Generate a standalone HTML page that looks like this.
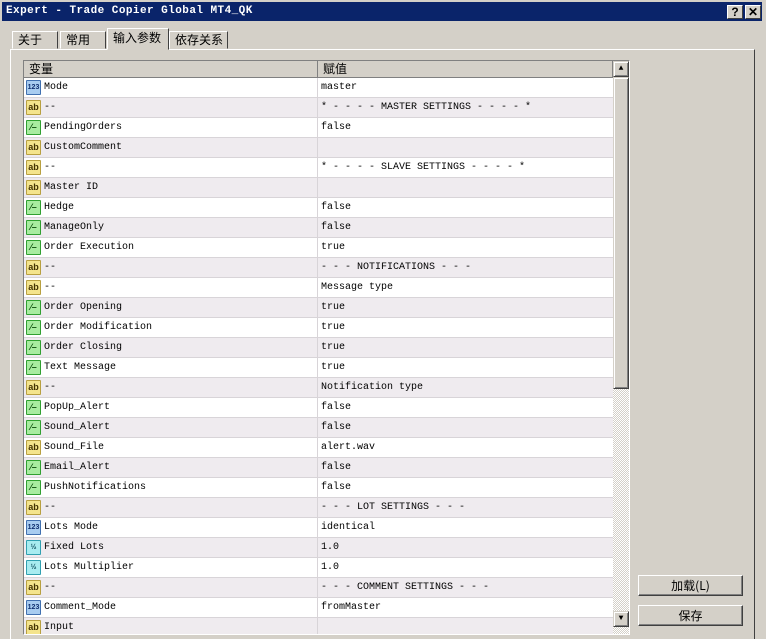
<!DOCTYPE html>
<html><head><meta charset="utf-8"><style>
*{margin:0;padding:0;box-sizing:border-box}
body{width:766px;height:630px;background:#d4d0c8;position:relative;overflow:hidden;font-family:"Liberation Mono","Noto Sans CJK SC",monospace;font-size:10px;color:#000}
.title{position:absolute;left:0;top:0;width:766px;height:22px;background:#d4d0c8;border-bottom:1px solid #d4d0c8}
.tb{position:absolute;left:2px;top:2px;width:760px;height:19px;background:#0a246a;color:#fff;font-weight:bold;font-size:11px;line-height:19px;padding-left:4px;letter-spacing:0.45px;font-family:"Liberation Mono",monospace}
.tbtn{position:absolute;top:5px;width:16px;height:14px;background:#d4d0c8;border:1px solid;border-color:#fff #404040 #404040 #fff;color:#000;font:bold 12px/12px "Liberation Sans",sans-serif;text-align:center}
.tab{position:absolute;height:18px;border:1px solid;border-color:#fff #404040 transparent #fff;font:12px/16px "Noto Sans CJK SC",sans-serif;padding-left:5px;background:#d4d0c8}
.panel{position:absolute;left:10px;top:49px;width:745px;height:590px;border-left:1px solid #fff;border-top:1px solid #fff;border-right:1px solid #404040}
.grid{position:absolute;left:23px;top:60px;width:607px;height:575px;border:1px solid;border-color:#808080 #fff #fff #808080;background:#fff;overflow:hidden}
.hdr{position:absolute;left:0;top:0;width:589px;height:17px;background:#d4d0c8;border-bottom:1px solid #808080;font:12px/16px "Noto Sans CJK SC",sans-serif}
.hdr span{position:absolute;top:0;height:16px;border-right:1px solid #808080;padding-left:5px}
.rows{position:absolute;left:0;top:17px;width:589px}
.r{height:20px;border-bottom:1px solid #d8d4d8;position:relative;line-height:20px;white-space:pre}
.r:nth-child(even){background:#efebef}
.r .n{position:absolute;left:20px;top:0}
.r .v{position:absolute;left:293px;top:0;border-left:1px solid #d8d4d8;height:19px;padding-left:3px}
.i{position:absolute;left:2px;top:2px;width:15px;height:15px;border:1px solid;font:bold 7px/13px "Liberation Sans",sans-serif;text-align:center;border-radius:1px}
.ab{background:#f4e48c;border-color:#b8a040;color:#403000;font-size:9px}
.nm{background:#a8ccf0;border-color:#4070b0;color:#103070}
.bo{background:#a8eca0;border-color:#30a030;color:#105010;font-size:9px}
.fr{background:#a8ecf0;border-color:#30a0b0;color:#105060}
.sb{position:absolute;left:589px;top:0;width:16px;height:573px;background:repeating-conic-gradient(#d4d0c8 0 25%,#fff 0 50%) 0 0/2px 2px}
.sbb{position:absolute;left:0;width:16px;height:16px;background:#d4d0c8;border:1px solid;border-color:#d4d0c8 #404040 #404040 #d4d0c8;box-shadow:inset 1px 1px #fff,inset -1px -1px #808080}
.thumb{position:absolute;left:0;top:16px;width:16px;height:312px;background:#d4d0c8;border:1px solid;border-color:#d4d0c8 #404040 #404040 #d4d0c8;box-shadow:inset 1px 1px #fff,inset -1px -1px #808080}
.btn{position:absolute;left:638px;width:105px;height:21px;border:1px solid;border-color:#fff #404040 #404040 #fff;box-shadow:inset -1px -1px #808080;font:12px/19px "Noto Sans CJK SC",sans-serif;text-align:center}
</style></head><body>
<div class="title"><div class="tb">Expert - Trade Copier Global MT4_QK</div>
<div class="tbtn" style="left:727px">?</div><div class="tbtn" style="left:745px">✕</div></div>
<div class="panel"></div>
<div class="tab" style="left:12px;top:31px;width:46px">关于</div>
<div class="tab" style="left:60px;top:31px;width:46px">常用</div>
<div class="tab" style="left:107px;top:28px;width:62px;height:22px;padding-top:1px;z-index:2">输入参数</div>
<div class="tab" style="left:169px;top:31px;width:59px">依存关系</div>
<div class="grid">
<div class="hdr"><span style="left:0;width:294px">变量</span><span style="left:294px;width:295px">赋值</span></div>
<div class="rows">
<div class="r"><i class="i nm">123</i><span class="n">Mode</span><span class="v">master</span></div>
<div class="r"><i class="i ab">ab</i><span class="n">--</span><span class="v">* - - - - MASTER SETTINGS - - - - *</span></div>
<div class="r"><i class="i bo">⁄–</i><span class="n">PendingOrders</span><span class="v">false</span></div>
<div class="r"><i class="i ab">ab</i><span class="n">CustomComment</span><span class="v"></span></div>
<div class="r"><i class="i ab">ab</i><span class="n">--</span><span class="v">* - - - - SLAVE SETTINGS - - - - *</span></div>
<div class="r"><i class="i ab">ab</i><span class="n">Master ID</span><span class="v"></span></div>
<div class="r"><i class="i bo">⁄–</i><span class="n">Hedge</span><span class="v">false</span></div>
<div class="r"><i class="i bo">⁄–</i><span class="n">ManageOnly</span><span class="v">false</span></div>
<div class="r"><i class="i bo">⁄–</i><span class="n">Order Execution</span><span class="v">true</span></div>
<div class="r"><i class="i ab">ab</i><span class="n">--</span><span class="v">- - - NOTIFICATIONS - - -</span></div>
<div class="r"><i class="i ab">ab</i><span class="n">--</span><span class="v">Message type</span></div>
<div class="r"><i class="i bo">⁄–</i><span class="n">Order Opening</span><span class="v">true</span></div>
<div class="r"><i class="i bo">⁄–</i><span class="n">Order Modification</span><span class="v">true</span></div>
<div class="r"><i class="i bo">⁄–</i><span class="n">Order Closing</span><span class="v">true</span></div>
<div class="r"><i class="i bo">⁄–</i><span class="n">Text Message</span><span class="v">true</span></div>
<div class="r"><i class="i ab">ab</i><span class="n">--</span><span class="v">Notification type</span></div>
<div class="r"><i class="i bo">⁄–</i><span class="n">PopUp_Alert</span><span class="v">false</span></div>
<div class="r"><i class="i bo">⁄–</i><span class="n">Sound_Alert</span><span class="v">false</span></div>
<div class="r"><i class="i ab">ab</i><span class="n">Sound_File</span><span class="v">alert.wav</span></div>
<div class="r"><i class="i bo">⁄–</i><span class="n">Email_Alert</span><span class="v">false</span></div>
<div class="r"><i class="i bo">⁄–</i><span class="n">PushNotifications</span><span class="v">false</span></div>
<div class="r"><i class="i ab">ab</i><span class="n">--</span><span class="v">- - - LOT SETTINGS - - -</span></div>
<div class="r"><i class="i nm">123</i><span class="n">Lots Mode</span><span class="v">identical</span></div>
<div class="r"><i class="i fr">½</i><span class="n">Fixed Lots</span><span class="v">1.0</span></div>
<div class="r"><i class="i fr">½</i><span class="n">Lots Multiplier</span><span class="v">1.0</span></div>
<div class="r"><i class="i ab">ab</i><span class="n">--</span><span class="v">- - - COMMENT SETTINGS - - -</span></div>
<div class="r"><i class="i nm">123</i><span class="n">Comment_Mode</span><span class="v">fromMaster</span></div>
<div class="r"><i class="i ab">ab</i><span class="n">Input</span><span class="v"></span></div>
</div>
<div class="sb"><div class="sbb" style="top:0;font-size:8px;text-align:center;line-height:13px">▲</div><div class="thumb"></div><div class="sbb" style="top:550px;font-size:8px;text-align:center;line-height:13px">▼</div></div>
</div>
<div class="btn" style="top:575px">加载(L)</div>
<div class="btn" style="top:605px">保存</div>
</body></html>
